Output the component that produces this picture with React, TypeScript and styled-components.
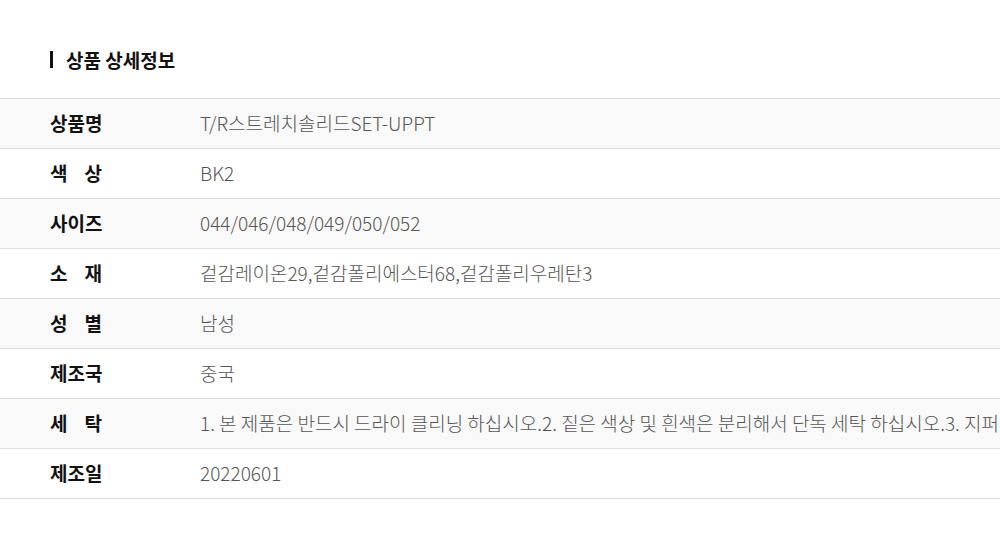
import styled, { createGlobalStyle } from 'styled-components';

const GlobalStyle = createGlobalStyle`
	body {
		margin: 0;
		background: #fff;
		font-family: "Noto Sans CJK KR", "Noto Sans", sans-serif;
		overflow: hidden;
	}
`

type Row = {
	label: string
	value: string
}

const rows: Row[] = [
	{ label: '상품명', value: 'T/R스트레치솔리드SET-UPPT' },
	{ label: '색 상', value: 'BK2' },
	{ label: '사이즈', value: '044/046/048/049/050/052' },
	{ label: '소 재', value: '겉감레이온29,겉감폴리에스터68,겉감폴리우레탄3' },
	{ label: '성 별', value: '남성' },
	{ label: '제조국', value: '중국' },
	{ label: '세 탁', value: '1. 본 제품은 반드시 드라이 클리닝 하십시오.2. 짙은 색상 및 흰색은 분리해서 단독 세탁 하십시오.3. 지퍼,단추 등 부자재는 세탁 시 주의하십시오.' },
	{ label: '제조일', value: '20220601' },
]

export default function App() {
	return (
		<>
			<GlobalStyle />
			<StyledSection>
				<StyledTitle>상품 상세정보</StyledTitle>
				<StyledTable>
					{rows.map((row, i) => (
						<StyledRow key={row.label} $striped={i % 2 === 0}>
							<StyledLabel><span>{row.label}</span></StyledLabel>
							<StyledValue>{row.value}</StyledValue>
						</StyledRow>
					))}
				</StyledTable>
			</StyledSection>
		</>
	)
}

const StyledSection = styled.section`
	padding-top: 46px;
	width: 1000px;
	overflow: hidden;
`

const StyledTitle = styled.h2`
	margin: 0 0 26px 50px;
	display: flex;
	align-items: center;
	gap: 13px;
	height: 26px;
	font-size: 19px;
	font-weight: 700;
	color: #111;
	&::before {
		content: '';
		width: 3px;
		height: 17px;
		background: #111;
	}
`

const StyledTable = styled.div`
	border-top: 1px solid #ddd;
	width: 1400px;
`

const StyledRow = styled.div<{ $striped: boolean }>`
	display: flex;
	align-items: center;
	height: 49px;
	padding-bottom: 3px;
	box-sizing: border-box;
	height: 50px;
	border-bottom: 1px solid #ddd;
	background: ${props => props.$striped ? '#f9f9f9' : '#fff'};
	white-space: nowrap;
`

const StyledLabel = styled.div`
	width: 200px;
	padding-left: 50px;
	box-sizing: border-box;
	flex-shrink: 0;
	font-size: 19px;
	font-weight: 700;
	color: #111;
	span {
		display: inline-block;
		width: 52px;
		text-align: justify;
		text-align-last: justify;
	}
`

const StyledValue = styled.div`
	font-size: 19px;
	font-weight: 300;
	color: #555;
`
